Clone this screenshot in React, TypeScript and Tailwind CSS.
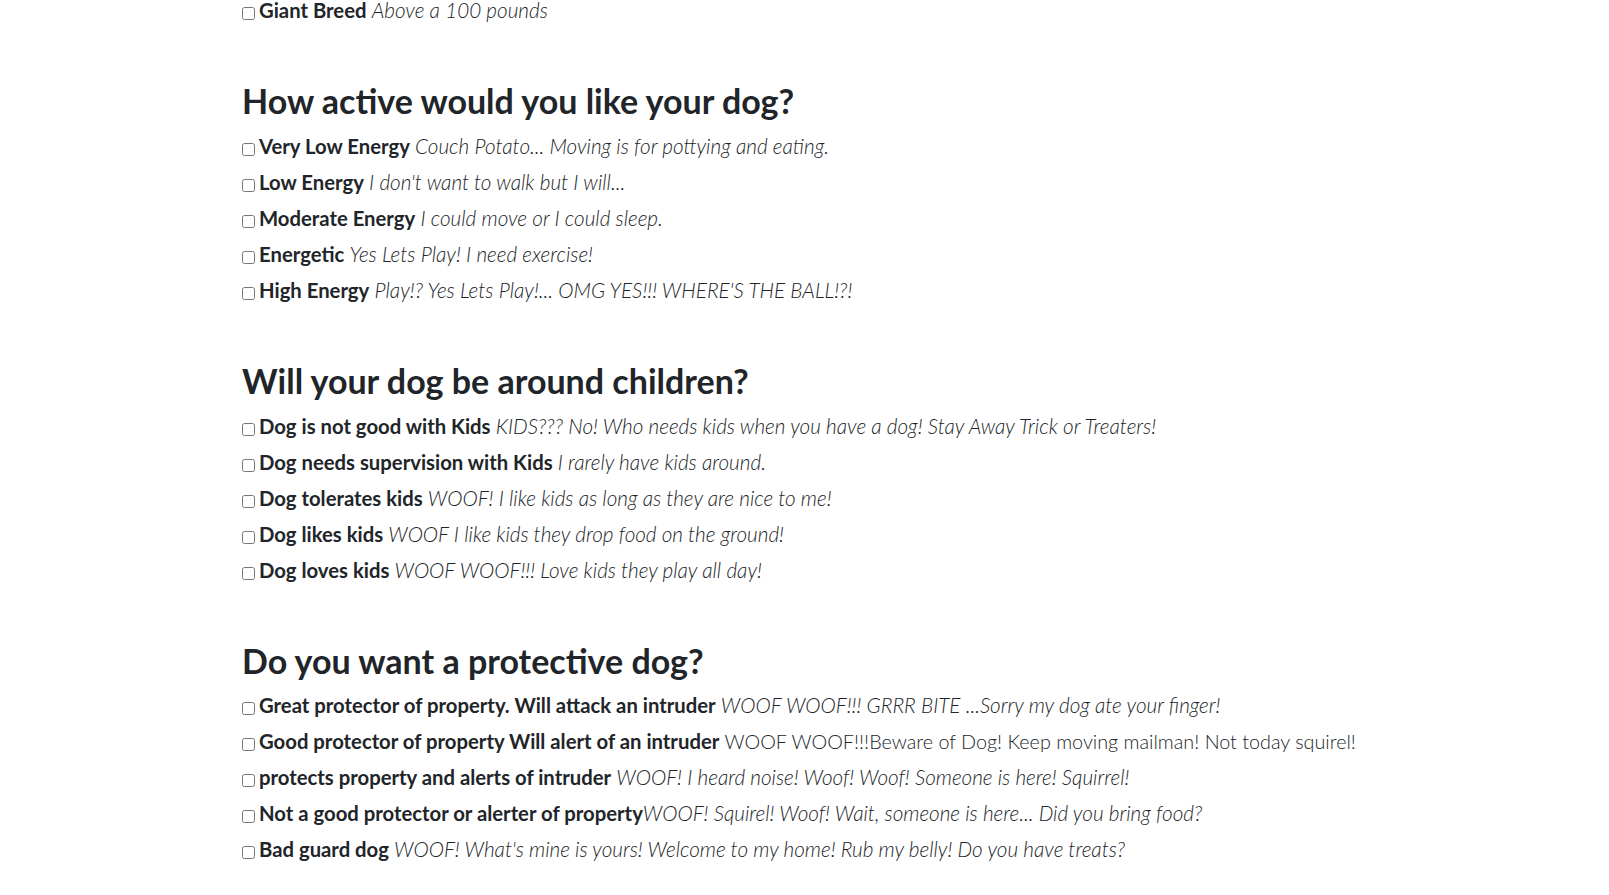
const SECTIONS = [
  {
    title: "How active would you like your dog?",
    options: [
      { label: "Very Low Energy", note: "Couch Potato... Moving is for pottying and eating." },
      { label: "Low Energy", note: "I don't want to walk but I will..." },
      { label: "Moderate Energy", note: "I could move or I could sleep." },
      { label: "Energetic", note: "Yes Lets Play! I need exercise!" },
      { label: "High Energy", note: "Play!? Yes Lets Play!... OMG YES!!! WHERE'S THE BALL!?!" },
    ],
  },
  {
    title: "Will your dog be around children?",
    options: [
      { label: "Dog is not good with Kids", note: "KIDS??? No! Who needs kids when you have a dog! Stay Away Trick or Treaters!" },
      { label: "Dog needs supervision with Kids", note: "I rarely have kids around." },
      { label: "Dog tolerates kids", note: "WOOF! I like kids as long as they are nice to me!" },
      { label: "Dog likes kids", note: "WOOF I like kids they drop food on the ground!" },
      { label: "Dog loves kids", note: "WOOF WOOF!!! Love kids they play all day!" },
    ],
  },
  {
    title: "Do you want a protective dog?",
    options: [
      { label: "Great protector of property. Will attack an intruder", note: "WOOF WOOF!!! GRRR BITE ...Sorry my dog ate your finger!" },
      { label: "Good protector of property Will alert of an intruder", note: "WOOF WOOF!!!Beware of Dog! Keep moving mailman! Not today squirel!", upright: true },
      { label: "protects property and alerts of intruder", note: "WOOF! I heard noise! Woof! Woof! Someone is here! Squirrel!" },
      { label: "Not a good protector or alerter of property", note: "WOOF! Squirel! Woof! Wait, someone is here... Did you bring food?", tight: true },
      { label: "Bad guard dog", note: "WOOF! What's mine is yours! Welcome to my home! Rub my belly! Do you have treats?" },
    ],
  },
];

type Option = { label: string; note: string; upright?: boolean; tight?: boolean; first?: boolean };

function Row({ label, note, upright, tight, first }: Option) {
  return (
    <div className={first ? "h-7 leading-5 whitespace-nowrap" : "h-9 leading-9 whitespace-nowrap"}>
      <input type="checkbox" className="relative top-[2px] mr-1 h-[13px] w-[13px] align-baseline" />
      <label className="font-bold">{label}</label>
      {tight ? "" : " "}
      <span className={upright ? "font-light text-[19.8px]" : "font-light italic text-[20.7px]"}>{note}</span>
    </div>
  );
}

export default function App() {
  return (
    <div className="min-h-screen bg-white text-[#212529] font-['Lato','Liberation_Sans',sans-serif] overflow-hidden">
      <div className="pl-[242px] text-[20.3px]">
        {/* tail of the previous question, scrolled mostly out of view */}
        <Row first label="Giant Breed" note="Above a 100 pounds" />

        {SECTIONS.map((s) => (
          <section key={s.title} className="mt-[53px]">
            <h2 className="mb-[6px] text-[34px] font-bold leading-[1.2]">{s.title}</h2>
            {s.options.map((o) => (
              <Row key={o.label} {...o} />
            ))}
          </section>
        ))}
      </div>
    </div>
  );
}
